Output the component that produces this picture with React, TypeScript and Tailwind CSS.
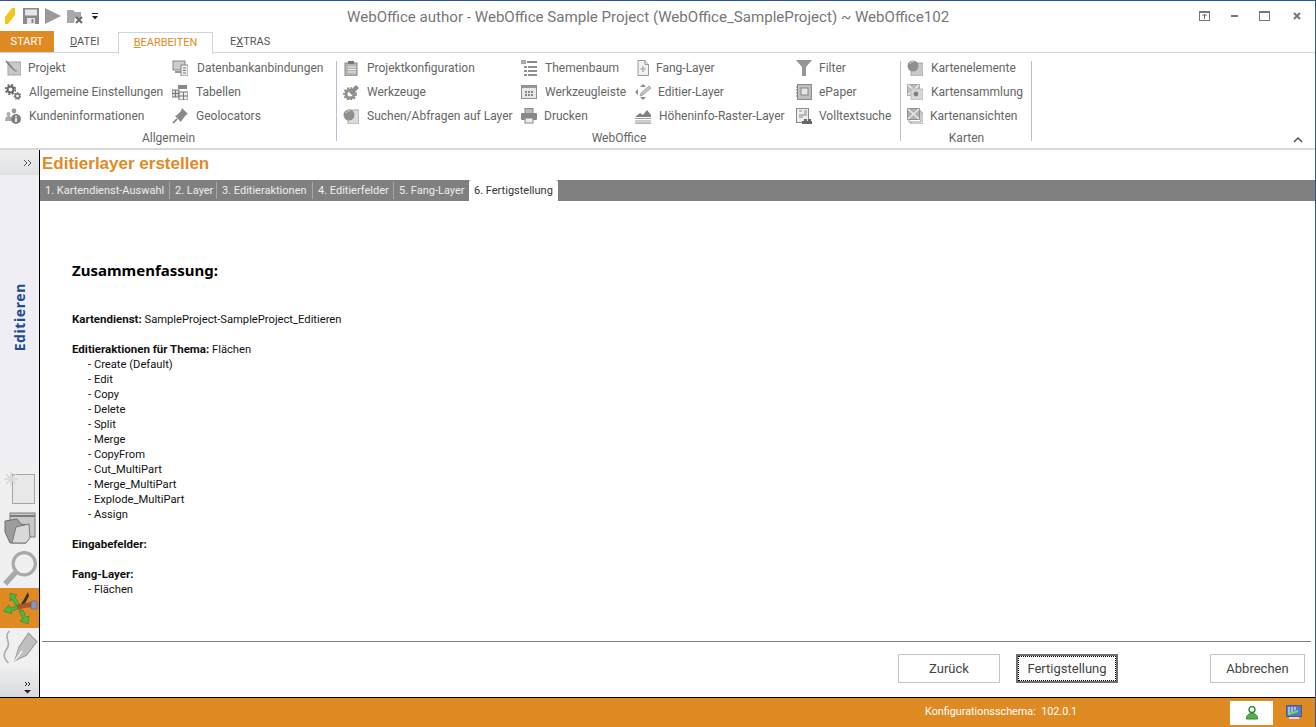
import React from "react";

const icons: Record<string, React.ReactNode> = {
  projekt: (
    <>
      <rect x="3" y="2" width="13" height="13" fill="#c9c9c9" stroke="#a5a5a5" />
      <path d="M1 1l8 9" stroke="#777" strokeWidth="1.5" />
      <path d="M7 8l3 4 3-1" fill="#999" />
    </>
  ),
  gears: (
    <>
      <circle cx="5.500" cy="5.500" r="3" fill="none" stroke="#666" strokeWidth="2" />
      <circle cx="5.500" cy="5.500" r="4.800" fill="none" stroke="#666" strokeWidth="1.600" strokeDasharray="2 1.800" />
      <circle cx="12.500" cy="12" r="2.100" fill="none" stroke="#777" strokeWidth="1.600" />
      <circle cx="12.500" cy="12" r="3.300" fill="none" stroke="#777" strokeWidth="1.300" strokeDasharray="1.600 1.300" />
    </>
  ),
  kunden: (
    <>
      <circle cx="9" cy="3" r="2.400" fill="#999" />
      <circle cx="3.500" cy="6" r="2" fill="#aaa" />
      <path d="M0 13c0-4 2-5 4-5s3 2 3 5z" fill="#aaa" />
      <circle cx="11" cy="11" r="5" fill="#808080" />
      <rect x="10.200" y="10" width="1.600" height="4" fill="#fff" />
      <rect x="10.200" y="7.800" width="1.600" height="1.400" fill="#fff" />
    </>
  ),
  db: (
    <>
      <rect x="1" y="1" width="12" height="9" fill="#ccc" stroke="#888" />
      <rect x="3" y="11" width="6" height="2" fill="#999" />
      <rect x="9" y="5" width="7" height="11" fill="#eee" stroke="#888" />
      <path d="M11 8h3M11 10.500h3M11 13h3" stroke="#777" />
    </>
  ),
  tabellen: (
    <>
      <rect x="6" y="1" width="9" height="4" fill="#888" />
      <rect x="0" y="6" width="7" height="7" fill="#ddd" stroke="#777" />
      <rect x="7" y="8" width="9" height="8" fill="#eee" stroke="#777" />
      <path d="M7 12h9M11.500 8v8M0 9.500h7M3.500 6v7" stroke="#777" />
    </>
  ),
  pin: (
    <>
      <path d="M10 0l6 6-2 1-4 5-1 2-6-6 2-1 4-4z" fill="#8a8a8a" />
      <path d="M5 11l-4 4" stroke="#777" strokeWidth="1.600" />
    </>
  ),
  clipboard: (
    <>
      <rect x="2" y="3" width="12" height="13" fill="#b5b5b5" stroke="#8a8a8a" />
      <rect x="5" y="1" width="6" height="3" fill="#777" />
      <path d="M5 7h8M5 9.500h8M5 12h8" stroke="#eee" />
    </>
  ),
  tools: (
    <>
      <circle cx="7" cy="10" r="4" fill="none" stroke="#929292" strokeWidth="3" />
      <circle cx="7" cy="10" r="6" fill="none" stroke="#929292" strokeWidth="1.800" strokeDasharray="2 1.500" />
      <path d="M6 8l7-7 3 3-7 7z" fill="#8d8d8d" />
    </>
  ),
  globeDoc: (
    <>
      <rect x="5" y="2" width="11" height="14" fill="#ddd" stroke="#aaa" />
      <circle cx="6" cy="7" r="5.500" fill="#8f8f8f" />
      <path d="M3 5a3 3 0 0 1 4-2" stroke="#ddd" fill="none" />
    </>
  ),
  tree: (
    <>
      <rect x="0" y="0" width="5" height="4" fill="#aaa" />
      <path d="M6 1h10v2H6z" fill="#888" />
      <path d="M3 6h3v2H3zM7 6h9v2H7zM3 10h3v2H3zM7 10h9v2H7zM7 14h9v2H7zM3 14h3v2H3z" fill="#919191" />
    </>
  ),
  toolbar: (
    <>
      <rect x="0.500" y="1.500" width="15" height="13" fill="#e8e8e8" stroke="#8f8f8f" />
      <rect x="1" y="2" width="14" height="2" fill="#999" />
      <path d="M4 7h2v2H4zM7 7h2v2H7zM10 7h2v2h-2zM4 10h2v2H4zM7 10h2v2H7zM10 10h2v2h-2z" fill="#888" />
    </>
  ),
  printer: (
    <>
      <rect x="4" y="0.500" width="8" height="5" fill="#bbb" stroke="#888" />
      <rect x="0" y="5" width="16" height="7" rx="1" fill="#888" />
      <rect x="4" y="10" width="8" height="5" fill="#eee" stroke="#888" />
    </>
  ),
  page: (
    <>
      <path d="M3 0.500h7l3.500 4v11H3z" fill="#f1f1f1" stroke="#9a9a9a" />
      <path d="M10 0.500v4h3.500" fill="#ddd" stroke="#9a9a9a" />
      <path d="M8 6v6M5.500 9h5" stroke="#aaa" strokeWidth="1.400" />
    </>
  ),
  editLayer: (
    <>
      <path d="M8 0l3 3H5zM8 16l-3-3h6zM0 8l3-3v6z" fill="#8c8c8c" />
      <path d="M14 2l2 2-8 7-3 1 1-3z" fill="#c5c5c5" stroke="#aaa" />
    </>
  ),
  height: (
    <>
      <path d="M0 9l5-4 3 2 4-5 4 5v2z" fill="#808080" />
      <path d="M0 10.500h16M0 13h16M0 15.200h16" stroke="#9a9a9a" strokeWidth="1.200" />
    </>
  ),
  filter: <path d="M0 0h16l-6 7v9H6V7z" fill="#949494" />,
  epaper: (
    <>
      <rect x="1.500" y="0.500" width="14" height="15" fill="#bfbfbf" stroke="#8a8a8a" />
      <rect x="5" y="4" width="7" height="7" fill="#e6e6e6" stroke="#8a8a8a" />
      <path d="M0 3h2M0 6h2M0 9h2M0 12h2" stroke="#777" />
    </>
  ),
  volltext: (
    <>
      <rect x="0.500" y="0.500" width="12" height="14" fill="#eee" stroke="#8a8a8a" />
      <path d="M3 3h3M8 3h3M8 5h3M3 7h8M3 9h4" stroke="#888" />
      <path d="M8 11h3v5H8zM12 11h3v5h-3zM6 13h10v3H6z" fill="#666" />
    </>
  ),
  elemente: (
    <>
      <rect x="4" y="3" width="12" height="13" fill="#c9c9c9" stroke="#aaa" />
      <circle cx="6" cy="6" r="5.500" fill="#8f8f8f" />
      <path d="M3 4a3 3 0 0 1 4-2" stroke="#ddd" fill="none" />
    </>
  ),
  sammlung: (
    <>
      <rect x="0.500" y="0.500" width="12" height="11" fill="#bbb" stroke="#aaa" />
      <path d="M1 1l11 10M12 1L1 11" stroke="#eee" strokeWidth="1.600" />
      <rect x="4" y="5" width="12" height="11" fill="#d8d8d8" stroke="#bbb" />
      <circle cx="9" cy="10" r="2.400" fill="#808080" />
    </>
  ),
  ansichten: (
    <>
      <path d="M4 5h12v11H4z" fill="#fff" stroke="#999" />
      <path d="M2 3h12v11H2z" fill="#fff" stroke="#999" />
      <rect x="0.500" y="0.500" width="12" height="11" fill="#b0b0b0" stroke="#8f8f8f" />
      <path d="M1 1l11 10M12 1L1 11" stroke="#e9e9e9" strokeWidth="1.600" />
    </>
  ),
};

const Icon = ({ name }: { name: string }) => (
  <svg viewBox="0 0 16 16" className="w-4 h-4 shrink-0">
    {icons[name]}
  </svg>
);

type Item = { icon: string; label: string; gap: string };

const RibbonItem = ({ item }: { item: Item }) => (
  <div className={`flex items-center h-6 ${item.gap}`}>
    <Icon name={item.icon} />
    <span className="whitespace-nowrap">{item.label}</span>
  </div>
);

const Column = ({ width, items }: { width: string; items: Item[] }) => (
  <div className={`flex flex-col ${width}`}>
    {items.map((it) => (
      <RibbonItem key={it.label} item={it} />
    ))}
  </div>
);

const Group = ({
  label,
  width,
  children,
}: {
  label: string;
  width: string;
  children: React.ReactNode;
}) => (
  <div className={`relative flex flex-col h-[95px] after:absolute after:right-0 after:top-[8px] after:h-[80px] after:w-px after:bg-[#b4c0d4] ${width}`}>
    <div className="flex flex-1 pt-[3px]">{children}</div>
    <div className="h-[20px] text-center leading-[20px] text-[#666]">{label}</div>
  </div>
);

const wizardTabs = [
  { label: "1. Kartendienst-Auswahl", w: "w-[130px]" },
  { label: "2. Layer", w: "w-[47px]" },
  { label: "3. Editieraktionen", w: "w-[96px]" },
  { label: "4. Editierfelder", w: "w-[81px]" },
  { label: "5. Fang-Layer", w: "w-[71px]" },
];

const summary = ["Create (Default)", "Edit", "Copy", "Delete", "Split", "Merge", "CopyFrom", "Cut_MultiPart", "Merge_MultiPart", "Explode_MultiPart", "Assign"];

const Bullet = ({ children }: { children: React.ReactNode }) => <div className="pl-4">- {children}</div>;

const Heading = ({ children }: { children: React.ReactNode }) => <b className="text-[11.5px]">{children}</b>;

const Btn = ({ label, className, focused }: { label: string; className: string; focused?: boolean }) => (
  <button
    className={`h-[29px] text-[13px] text-[#444] bg-white ${className} ${
      focused ? "border-2 border-[#6f6f6f] outline-1 outline-dotted outline-black -outline-offset-3" : "border border-[#c4c4c4]"
    }`}
  >
    {label}
  </button>
);

export default function App() {
  return (
    <div className="w-[1316px] h-[727px] flex flex-col overflow-hidden bg-white border-t border-r border-[#2b579a] text-[12px] text-[#666] font-['Roboto',sans-serif]">
      {/* title bar */}
      <div className="h-[30px] flex items-center relative shrink-0">
        <div className="flex items-center gap-[6px] pl-[5px]">
          <svg viewBox="0 0 10 16" className="w-[10px] h-4">
            <path d="M0 9L7 0h3v7l-7 9H0z" fill="#f5c518" />
          </svg>
          <svg viewBox="0 0 16 16" className="w-4 h-4 ml-[2px]">
            <path d="M0 0h16v16H0z" fill="#8a8a8a" />
            <rect x="2" y="1.500" width="12" height="6" fill="#e6e6e6" />
            <rect x="4" y="10" width="8" height="6" fill="#e6e6e6" />
            <rect x="8.500" y="11" width="2" height="4" fill="#8a8a8a" />
          </svg>
          <svg viewBox="0 0 16 16" className="w-4 h-4">
            <path d="M0 0l16 8-16 8z" fill="#9a9a9a" />
          </svg>
          <svg viewBox="0 0 16 16" className="w-4 h-4">
            <path d="M0 2h6l2 2h6v6H8l-1 5H0z" fill="#a8a8a8" />
            <path d="M9 9l6 6M15 9l-6 6" stroke="#666" strokeWidth="2" />
          </svg>
          <svg viewBox="0 0 6 7" className="w-[6px] h-[7px] ml-[3px]">
            <path d="M0 0h6v1H0zM0 3h6L3 6.500z" fill="#222" />
          </svg>
        </div>
        <div className="absolute left-[347px] top-[5px] text-[15.1px] text-[#777] whitespace-nowrap">
          WebOffice author - WebOffice Sample Project (WebOffice_SampleProject) ~ WebOffice102
        </div>
        <div className="ml-auto flex items-center pr-[14px] gap-[21px]">
          <svg viewBox="0 0 11 10" className="w-[11px] h-[10px]">
            <rect x="0.500" y="0.500" width="10" height="9" fill="none" stroke="#777" />
            <path d="M0 1.500h11" stroke="#777" />
            <path d="M5.500 3v5M3.500 5l2-2 2 2" fill="none" stroke="#666" />
          </svg>
          <div className="w-[7px] h-[2px] bg-[#777]" />
          <div className="w-[11px] h-[10px] border border-[#777] border-t-[2px]" />
          <svg viewBox="0 0 8 8" className="w-2 h-2 ml-[2px]">
            <path d="M1 1l6 6M7 1L1 7" stroke="#777" strokeWidth="2" />
          </svg>
        </div>
      </div>

      {/* ribbon tabs */}
      <div className="h-[22px] flex shrink-0 items-stretch text-[#555] text-[11px] border-b border-[#d4d4d4]">
        <div className="w-[54px] bg-[#e08a24] text-white text-center leading-[22px]">START</div>
        <div className="ml-[16px] w-[48px] leading-[22px]">
          <u>D</u>ATEI
        </div>
        <div className="w-[95px] h-[22px] mt-px border border-b-0 border-[#d4d4d4] bg-white text-center leading-[20px] text-[#e08a24]">
          <u>B</u>EARBEITEN
        </div>
        <div className="ml-[17px] leading-[22px]">
          E<u>X</u>TRAS
        </div>
      </div>

      {/* ribbon */}
      <div className="h-[97px] shrink-0 flex items-start border-b-[2px] border-[#d8d8d8] relative">
        <Group label="Allgemein" width="w-[337px]">
          <Column
            width="w-[172px] pl-[5px]"
            items={[
              { icon: "projekt", label: "Projekt", gap: "gap-[7px]" },
              { icon: "gears", label: "Allgemeine Einstellungen", gap: "gap-[8px]" },
              { icon: "kunden", label: "Kundeninformationen", gap: "gap-[8px]" },
            ]}
          />
          <Column
            items={[
              { icon: "db", label: "Datenbankanbindungen", gap: "gap-[9px]" },
              { icon: "tabellen", label: "Tabellen", gap: "gap-[8px]" },
              { icon: "pin", label: "Geolocators", gap: "gap-[8px]" },
            ]}
            width="w-auto"
          />
        </Group>
        <Group label="WebOffice" width="w-[564px]">
          <Column
            width="w-[184px] pl-[6px]"
            items={[
              { icon: "clipboard", label: "Projektkonfiguration", gap: "gap-[8px]" },
              { icon: "tools", label: "Werkzeuge", gap: "gap-[8px]" },
              { icon: "globeDoc", label: "Suchen/Abfragen auf Layer", gap: "gap-[8px]" },
            ]}
          />
          <Column
            width="w-[114px]"
            items={[
              { icon: "tree", label: "Themenbaum", gap: "gap-[8px]" },
              { icon: "toolbar", label: "Werkzeugleiste", gap: "gap-[8px]" },
              { icon: "printer", label: "Drucken", gap: "gap-[7px]" },
            ]}
          />
          <Column
            width="w-[161px]"
            items={[
              { icon: "page", label: "Fang-Layer", gap: "gap-[5px]" },
              { icon: "editLayer", label: "Editier-Layer", gap: "gap-[7px]" },
              { icon: "height", label: "Höheninfo-Raster-Layer", gap: "gap-[8px]" },
            ]}
          />
          <Column
            width="w-auto"
            items={[
              { icon: "filter", label: "Filter", gap: "gap-[7px]" },
              { icon: "epaper", label: "ePaper", gap: "gap-[7px]" },
              { icon: "volltext", label: "Volltextsuche", gap: "gap-[7px]" },
            ]}
          />
        </Group>
        <Group label="Karten" width="w-[131px]">
          <Column
            width="w-auto pl-[6px]"
            items={[
              { icon: "elemente", label: "Kartenelemente", gap: "gap-[8px]" },
              { icon: "sammlung", label: "Kartensammlung", gap: "gap-[8px]" },
              { icon: "ansichten", label: "Kartenansichten", gap: "gap-[7px]" },
            ]}
          />
        </Group>
        <svg viewBox="0 0 10 6" className="absolute right-[12px] bottom-[5px] w-[10px] h-[6px]">
          <path d="M1 5l4-4 4 4" fill="none" stroke="#555" strokeWidth="1.500" />
        </svg>
      </div>

      {/* body */}
      <div className="flex-1 flex min-h-0 border-b border-black">
        {/* sidebar */}
        <div className="w-[39px] shrink-0 flex flex-col bg-[#eeeef4]">
          <div className="h-[25px] shrink-0 flex items-center justify-end pr-[7px] bg-gradient-to-b from-[#eeeeee] to-[#dfe1e4]">
            <svg viewBox="0 0 9 8" className="w-[9px] h-2">
              <path d="M1 1l3 3-3 3M5 1l3 3-3 3" fill="none" stroke="#555" />
            </svg>
          </div>
          <div className="h-[290px] shrink-0 flex items-center justify-center pb-[5px]">
            <span className="[writing-mode:vertical-rl] rotate-180 text-[14px] font-bold text-[#1f4a94] tracking-[0.6px] font-['Noto_Sans',sans-serif]">
              Editieren
            </span>
          </div>
          <div className="flex-1 flex flex-col bg-[#f0f0f0]">
            <div className="h-[43px] shrink-0 flex items-end justify-center">
              <svg viewBox="0 0 34 34" className="w-[34px] h-[34px] mb-[3px]">
                <rect x="9.500" y="3.500" width="22" height="29" fill="#e8e8e8" stroke="#a5a5a5" />
                <path d="M8 1v14M1 8h14M3 3l10 10M13 3L3 13" stroke="#d8d8d8" strokeWidth="1.500" />
              </svg>
            </div>
            <div className="h-[40px] shrink-0 flex items-center justify-center">
              <svg viewBox="0 0 32 32" className="w-[32px] h-[32px]">
                <rect x="6" y="1" width="25" height="24" fill="#c8c8c8" stroke="#7a7a7a" />
                <path d="M6 4h25" stroke="#7a7a7a" strokeWidth="2" />
                <path d="M1 9l12-2 4 5 6 1 1 13-2 5H6L1 20z" fill="#9c9c9c" stroke="#6f6f6f" />
                <path d="M12 15l13-3 1 14-4 5H8z" fill="#d8d8d8" stroke="#7a7a7a" />
              </svg>
            </div>
            <div className="h-[40px] shrink-0 flex items-center justify-center">
              <svg viewBox="0 0 34 34" className="w-[36px] h-[36px]">
                <circle cx="21" cy="13" r="10.500" fill="none" stroke="#a9a9a9" strokeWidth="3" />
                <path d="M13 21L3 32" stroke="#a9a9a9" strokeWidth="5" />
              </svg>
            </div>
            <div className="h-[40px] shrink-0 flex items-center justify-center bg-[#e08a24]">
              <svg viewBox="0 0 36 36" className="w-[36px] h-[36px]">
                <path d="M8 3l7 2-2 2 4 7-3 2-4-7-2 2z" fill="#4cb83c" stroke="#2a7a2a" strokeWidth="0.500" />
                <path d="M1 21l6-6 1 3 7-2 1 3-7 2 1 3z" fill="#4cb83c" stroke="#2a7a2a" strokeWidth="0.500" />
                <path d="M17 21l4-1 3 7 3-1-1 8-8-3 3-2z" fill="#4cb83c" stroke="#2a7a2a" strokeWidth="0.500" />
                <path d="M26 2l-5 9-5 7 6-3 5-9z" fill="#333" />
                <path d="M15 15l9-2 5-1 1 5-8 1-6 2z" fill="#a9562a" />
                <rect x="29" y="11" width="6" height="8" rx="1" fill="#8a93c9" stroke="#555" strokeWidth="0.500" />
              </svg>
            </div>
            <div className="h-[40px] shrink-0 flex items-center justify-center">
              <svg viewBox="0 0 34 34" className="w-[36px] h-[36px]">
                <path d="M25 3l8 8-10 13-11 5 4-13z" fill="#c0c0c0" stroke="#9a9a9a" />
                <path d="M12 29l7-9" stroke="#fff" />
                <path d="M7 1C1 7 9 11 5 17S1 26 6 31" fill="none" stroke="#aaa" strokeWidth="1.500" />
              </svg>
            </div>
            <div className="flex-1 flex flex-col items-end justify-end pr-[8px] pb-[2px] bg-gradient-to-b from-[#eeeeee] to-[#d9dbe0]">
              <svg viewBox="0 0 7 14" className="w-[7px] h-[14px]">
                <path d="M1 1l2 2-2 2M4 1l2 2-2 2" fill="none" stroke="#222" />
                <path d="M0 9h7l-3.500 3.500z" fill="#222" />
              </svg>
            </div>
          </div>
        </div>

        {/* main */}
        <div className="flex-1 min-w-0 flex flex-col border-l border-black">
          <div className="h-[30px] shrink-0 pl-[2px] pt-[3px] text-[17px] leading-[22px] font-bold text-[#e08a24] font-['Liberation_Sans',sans-serif]">
            Editierlayer erstellen
          </div>
          <div className="h-[21px] shrink-0 flex bg-[#808080] text-[#eeeeee] text-[11px] leading-[21px]">
            <div className="w-[4px]" />
            {wizardTabs.map((t, i) => (
              <div key={t.label} className={`${t.w} pl-[1px] whitespace-nowrap ${i < 4 ? "relative after:absolute after:right-[4px] after:top-[2px] after:bottom-[2px] after:w-px after:bg-[#a8a8a0]" : ""}`}>
                {t.label}
              </div>
            ))}
            <div className="w-[89px] bg-white text-[#333] pl-[5px] whitespace-nowrap rounded-t-[2px]">6. Fertigstellung</div>
          </div>

          <div className="flex-1 min-h-0 flex flex-col pl-[32px]">
            <div className="h-[440px] shrink-0 pt-[58px] text-[11.2px] leading-[15px] text-[#111]">
              <div className="h-[23px] text-[15px] font-bold leading-[23px] text-black font-['Noto_Sans',sans-serif]">Zusammenfassung:</div>
              <div className="h-[30px]" />
              <div>
                <Heading>Kartendienst:</Heading> SampleProject-SampleProject_Editieren
              </div>
              <div className="h-[15px]" />
              <div>
                <Heading>Editieraktionen für Thema:</Heading> Flächen
              </div>
              {summary.map((s) => (
                <Bullet key={s}>{s}</Bullet>
              ))}
              <div className="h-[15px]" />
              <div>
                <Heading>Eingabefelder:</Heading>
              </div>
              <div className="h-[15px]" />
              <div>
                <Heading>Fang-Layer:</Heading>
              </div>
              <Bullet>Flächen</Bullet>
            </div>
          </div>

          <div className="shrink-0 h-[56px] ml-[2px] mr-[4px] border-t border-[#808080] flex items-start pt-[12px]">
            <Btn label="Zurück" className="ml-[856px] w-[102px]" />
            <Btn label="Fertigstellung" className="ml-[16px] w-[102px]" focused />
            <Btn label="Abbrechen" className="ml-[92px] w-[95px]" />
          </div>
        </div>
      </div>

      {/* status bar */}
      <div className="h-[29px] shrink-0 flex items-center bg-[#e08a24] text-white text-[10.8px]">
        <span className="ml-[925px] whitespace-pre">Konfigurationsschema:  102.0.1</span>
        <div className="ml-auto w-[43px] h-[24px] bg-white flex items-center justify-center">
          <svg viewBox="0 0 12 14" className="w-3 h-[14px]">
            <circle cx="6" cy="3.500" r="3" fill="none" stroke="#2e8b2e" strokeWidth="1.400" />
            <path d="M0.500 13c0-4 2-5.500 5.500-5.500s5.500 1.500 5.500 5.500z" fill="#54b054" stroke="#2e8b2e" />
          </svg>
        </div>
        <svg viewBox="0 0 16 15" className="w-4 h-[15px] ml-[13px] mr-[13px]">
          <rect x="0.500" y="0.500" width="15" height="11" fill="#5a78c8" stroke="#4a5a8a" />
          <path d="M3 2v8M6 2v5M9 2v3" stroke="#fff" />
          <path d="M3 9l9-3" stroke="#6fe04a" strokeWidth="2" />
          <rect x="3" y="12" width="10" height="2" fill="#ddd" />
        </svg>
      </div>
    </div>
  );
}
